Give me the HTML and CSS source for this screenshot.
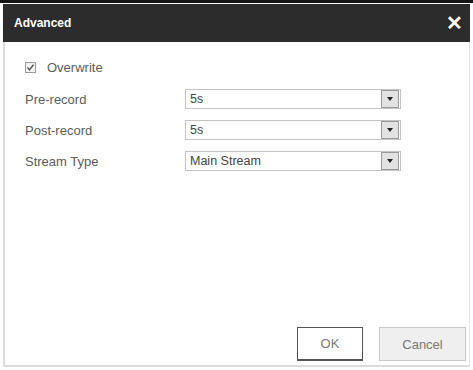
FILE: index.html
```html
<!DOCTYPE html>
<html lang="en">
<head>
  <meta charset="UTF-8">
  <meta name="viewport" content="width=device-width, initial-scale=1.0">
  <title>Advanced</title>
  <link rel="stylesheet" href="styles.css">
</head>
<body>
  <div class="dialog">
    <div class="titlebar">
      <span class="title">Advanced</span>
      <span class="close">&#x2715;</span>
    </div>
    <div class="content">
      <div class="form">
        <label class="check-row">
          <span class="checkbox">
            <svg width="9" height="9" viewBox="0 0 9 9"><path d="M1.5 4.5 L3.5 6.8 L7.5 1.8" fill="none" stroke="#555" stroke-width="1.4"/></svg>
          </span>
          Overwrite
        </label>
        <div class="field">
          <span class="label">Pre-record</span>
          <div class="select"><span class="value">5s</span><span class="arrow"></span></div>
        </div>
        <div class="field">
          <span class="label">Post-record</span>
          <div class="select"><span class="value">5s</span><span class="arrow"></span></div>
        </div>
        <div class="field">
          <span class="label">Stream Type</span>
          <div class="select"><span class="value">Main Stream</span><span class="arrow"></span></div>
        </div>
      </div>
      <div class="buttons">
        <button class="btn ok">OK</button>
        <button class="btn cancel">Cancel</button>
      </div>
    </div>
  </div>
</body>
</html>
```

FILE: styles.css
```css
body {
  margin: 0;
  background: #fff;
  font-family: "Liberation Sans", Arial, sans-serif;
  color: #5c5c5c;
  border-top: 3px solid #151515;
}

.dialog { margin-left: 3px; width: 467px; height: 364px; display: flex; flex-direction: column; }

.titlebar {
  height: 38px;
  margin-top: 1px;
  background: #2c2c2c;
  display: flex;
  align-items: center;
  justify-content: space-between;
  padding: 0 7px 0 11px;
}
.title { color: #fff; font-weight: bold; font-size: 12px; }
.close { color: #fff; font-size: 20px; font-weight: bold; }

.content {
  flex: 1;
  display: flex;
  flex-direction: column;
  border-left: 2px solid #dcdcdc;
  border-right: 1px solid #e4e4e4;
  border-bottom: 2px solid #dcdcdc;
  padding: 20px 3px 4px 20px;
}

.form { flex: 1; display: flex; flex-direction: column; font-size: 13px; }

.check-row { display: flex; align-items: center; gap: 11px; height: 11px; margin-bottom: 16px; }
.checkbox {
  width: 9px; height: 9px;
  border: 1px solid #999;
  background: #f4f4f4;
  display: flex; align-items: center; justify-content: center;
}

.field { display: flex; align-items: center; height: 20px; margin-bottom: 11px; }
.label { width: 160px; }
.select {
  box-sizing: border-box;
  width: 216px;
  height: 20px;
  border: 1px solid #c4c4c4;
  display: flex;
  align-items: center;
  justify-content: space-between;
  padding-left: 4px;
  font-size: 12.5px;
  color: #444;
}
.arrow {
  width: 16px; height: 16px;
  margin-right: 1px;
  border: 1px solid #999;
  background: #e2e2e2;
  display: flex; align-items: center; justify-content: center;
}
.arrow::after {
  content: "";
  border-left: 3.5px solid transparent;
  border-right: 3.5px solid transparent;
  border-top: 4px solid #222;
}

.buttons { display: flex; justify-content: flex-end; gap: 16px; }
.btn {
  height: 34px;
  font-family: inherit;
  font-size: 13px;
  color: #777;
}
.ok { width: 66px; background: #fff; border: 1px solid #555; border-bottom-width: 2px; }
.cancel { width: 87px; background: #efefef; border: 1px solid #c8c8c8; }
```
